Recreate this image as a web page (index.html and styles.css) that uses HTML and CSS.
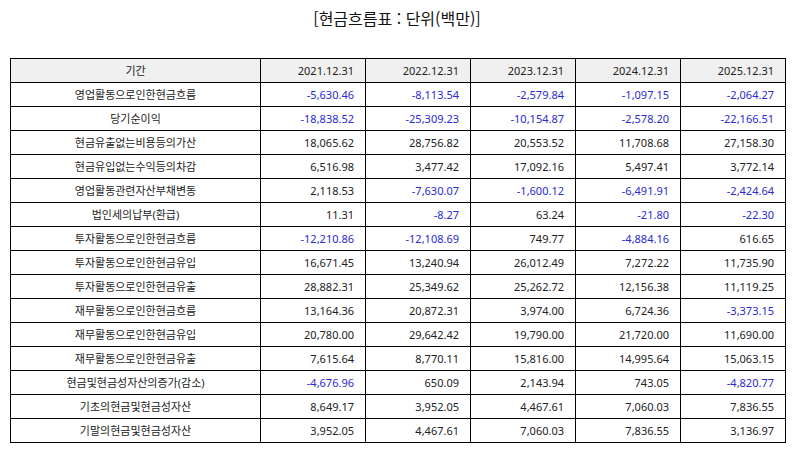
FILE: index.html
```html
<!DOCTYPE html>
<html lang="ko">
<head>
<meta charset="utf-8">
<link rel="stylesheet" href="styles.css">
</head>
<body>
<div class="page">
  <h1 class="title">[현금흐름표 : 단위(백만)]</h1>
  <table class="cf">
    <colgroup>
      <col class="c-label"><col class="c-num"><col class="c-num"><col class="c-num"><col class="c-num"><col class="c-num">
    </colgroup>
    <thead>
      <tr><th class="lbl">기간</th><th>2021.12.31</th><th>2022.12.31</th><th>2023.12.31</th><th>2024.12.31</th><th>2025.12.31</th></tr>
    </thead>
    <tbody>
      <tr><td class="lbl">영업활동으로인한현금흐름</td><td class="neg">-5,630.46</td><td class="neg">-8,113.54</td><td class="neg">-2,579.84</td><td class="neg">-1,097.15</td><td class="neg">-2,064.27</td></tr>
      <tr><td class="lbl">당기순이익</td><td class="neg">-18,838.52</td><td class="neg">-25,309.23</td><td class="neg">-10,154.87</td><td class="neg">-2,578.20</td><td class="neg">-22,166.51</td></tr>
      <tr><td class="lbl">현금유출없는비용등의가산</td><td>18,065.62</td><td>28,756.82</td><td>20,553.52</td><td>11,708.68</td><td>27,158.30</td></tr>
      <tr><td class="lbl">현금유입없는수익등의차감</td><td>6,516.98</td><td>3,477.42</td><td>17,092.16</td><td>5,497.41</td><td>3,772.14</td></tr>
      <tr><td class="lbl">영업활동관련자산부채변동</td><td>2,118.53</td><td class="neg">-7,630.07</td><td class="neg">-1,600.12</td><td class="neg">-6,491.91</td><td class="neg">-2,424.64</td></tr>
      <tr><td class="lbl">법인세의납부(환급)</td><td>11.31</td><td class="neg">-8.27</td><td>63.24</td><td class="neg">-21.80</td><td class="neg">-22.30</td></tr>
      <tr><td class="lbl">투자활동으로인한현금흐름</td><td class="neg">-12,210.86</td><td class="neg">-12,108.69</td><td>749.77</td><td class="neg">-4,884.16</td><td>616.65</td></tr>
      <tr><td class="lbl">투자활동으로인한현금유입</td><td>16,671.45</td><td>13,240.94</td><td>26,012.49</td><td>7,272.22</td><td>11,735.90</td></tr>
      <tr><td class="lbl">투자활동으로인한현금유출</td><td>28,882.31</td><td>25,349.62</td><td>25,262.72</td><td>12,156.38</td><td>11,119.25</td></tr>
      <tr><td class="lbl">재무활동으로인한현금흐름</td><td>13,164.36</td><td>20,872.31</td><td>3,974.00</td><td>6,724.36</td><td class="neg">-3,373.15</td></tr>
      <tr><td class="lbl">재무활동으로인한현금유입</td><td>20,780.00</td><td>29,642.42</td><td>19,790.00</td><td>21,720.00</td><td>11,690.00</td></tr>
      <tr><td class="lbl">재무활동으로인한현금유출</td><td>7,615.64</td><td>8,770.11</td><td>15,816.00</td><td>14,995.64</td><td>15,063.15</td></tr>
      <tr><td class="lbl">현금및현금성자산의증가(감소)</td><td class="neg">-4,676.96</td><td>650.09</td><td>2,143.94</td><td>743.05</td><td class="neg">-4,820.77</td></tr>
      <tr><td class="lbl">기초의현금및현금성자산</td><td>8,649.17</td><td>3,952.05</td><td>4,467.61</td><td>7,060.03</td><td>7,836.55</td></tr>
      <tr><td class="lbl">기말의현금및현금성자산</td><td>3,952.05</td><td>4,467.61</td><td>7,060.03</td><td>7,836.55</td><td>3,136.97</td></tr>
    </tbody>
  </table>
</div>
</body>
</html>
```
FILE: styles.css
```css
html, body {
  margin: 0;
  padding: 0;
  background: #ffffff;
}
.page {
  padding: 0 10px;
  font-family: "Noto Sans", "Noto Sans CJK KR", sans-serif;
  color: #222222;
}
.title {
  margin: 0;
  height: 58px;
  padding-top: 4px;
  box-sizing: border-box;
  font-family: "Noto Sans CJK KR", sans-serif;
  font-size: 16px;
  font-weight: normal;
  line-height: 28px;
  text-align: center;
  color: #111111;
}
.cf {
  width: 775px;
  border-collapse: collapse;
  table-layout: fixed;
  font-size: 11px;
}
.c-label { width: 250px; }
.c-num { width: 105px; }
.cf th, .cf td {
  border: 1px solid #000000;
  height: 24px;
  padding: 0 11px 0 6px;
  box-sizing: border-box;
  text-align: right;
  font-weight: normal;
  white-space: nowrap;
  line-height: 14px;
}
.cf th {
  background: #f0f0f0;
}
.cf .lbl {
  text-align: center;
  padding: 0 6px;
}
.cf .neg {
  color: #2a2ad4;
}
```
